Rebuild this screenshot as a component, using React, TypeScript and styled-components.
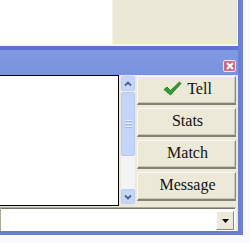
import React from 'react';
import styled, { createGlobalStyle } from 'styled-components';

const GlobalStyle = createGlobalStyle`
    html, body {
        margin: 0;
        padding: 0;
        background: #fbfbfd;
    }
    body {
        font-family: 'Liberation Serif', 'Times New Roman', serif;
    }
`;

const Window = styled.div`
    width: 238px;
    height: 231px;
    border-right: 5px solid #6c7fd5;
    border-bottom: 4px solid #6a7bd0;
    background: #ece9d8;
    display: flex;
    flex-direction: column;
`;

const TopArea = styled.div`
    height: 44px;
    display: flex;
    border-bottom: 2px solid #f6f5ef;
`;

const ListPane = styled.div`
    width: 112px;
    background: #fff;
    border-right: 1px solid #f3f2ec;
`;

const SidePane = styled.div`
    flex: 1;
    background: #ebe8d8;
    border-right: 1px solid #f4f3ee;
`;

const TitleBar = styled.div`
    height: 22px;
    border-top: 4px solid #5d73cf;
    background: linear-gradient(#8199e2, #7a93de);
    display: flex;
    align-items: flex-end;
    justify-content: flex-end;
    padding: 0 2px 3px 0;
    box-sizing: content-box;
`;

const CloseBox = styled.div`
    width: 13px;
    height: 12px;
    box-sizing: border-box;
    border: 1px solid #f1e6ee;
    border-radius: 2px;
    background: #c96c86;
    display: flex;
    align-items: center;
    justify-content: center;
`;

const Body = styled.div`
    display: flex;
    height: 131px;
`;

const ChatText = styled.div`
    width: 119px;
    background: #fff;
    border-top: 1px solid #000;
    border-right: 1px solid #000;
    border-bottom: 1px solid #000;
    box-sizing: border-box;
`;

const ScrollBar = styled.div`
    width: 14px;
    margin: 1px 0 2px 2px;
    background: #f4f4f6;
    display: flex;
    flex-direction: column;
`;

const ArrowBtn = styled.div`
    height: 15px;
    box-sizing: border-box;
    border: 1px solid #bccdf6;
    border-radius: 2px;
    background: #c6d5fb;
    display: flex;
    align-items: center;
    justify-content: center;
`;

const Thumb = styled.div<{ $size: number }>`
    height: ${(p) => p.$size}px;
    margin-top: 1px;
    box-sizing: border-box;
    border: 1px solid #b6c9f6;
    border-radius: 2px;
    background: #c4d4fb;
    display: flex;
    flex-direction: column;
    align-items: center;
    justify-content: center;
    gap: 1px;
`;

const GripLine = styled.div`
    width: 7px;
    height: 1px;
    background: #e9effd;
    border-bottom: 1px solid #9fb5ef;
`;

const Track = styled.div`
    flex: 1;
`;

const ButtonColumn = styled.div`
    width: 99px;
    margin-left: 2px;
    padding-top: 1px;
    display: flex;
    flex-direction: column;
    gap: 3px;
`;

const ActionButton = styled.div`
    height: 29px;
    box-sizing: border-box;
    background: #ece9d8;
    border-top: 1px solid #fbfaf6;
    border-left: 1px solid #fbfaf6;
    border-right: 1px solid #8d8a7c;
    border-bottom: 2px solid #858274;
    box-shadow: inset -1px -1px 0 #c9c6b6;
    display: flex;
    align-items: center;
    justify-content: center;
    gap: 5px;
    font-family: 'Liberation Serif', 'Times New Roman', serif;
    font-size: 16px;
    color: #111;
    padding: 0 0 3px 2px;
`;

const ComboRow = styled.div`
    flex: 1;
    padding: 1px 2px 0 0;
    display: flex;
`;

const Combo = styled.div`
    flex: 1;
    box-sizing: border-box;
    background: #fff;
    border-top: 1px solid #a9a799;
    border-left: 1px solid #a9a799;
    border-right: 1px solid #f8f7f2;
    box-shadow: inset 0 1px 0 #77756a;
    display: flex;
    justify-content: flex-end;
    padding: 3px 1px 1px 0;
`;

const ComboArrow = styled.div`
    width: 18px;
    box-sizing: border-box;
    background: #ece9d8;
    border-top: 1px solid #fff;
    border-left: 1px solid #fff;
    border-right: 1px solid #8a877a;
    border-bottom: 1px solid #8a877a;
    display: flex;
    align-items: center;
    justify-content: center;
`;

function Check() {
    return (
        <svg width="19" height="15" viewBox="0 0 19 15">
            <path
                d="M1 8.5 L4 6 L7.5 9.5 L16.5 1 L18 2.5 L7.5 14 Z"
                fill="#2f9e32"
                stroke="#1f6f22"
                strokeWidth="0.8"
                strokeLinejoin="round"
            />
        </svg>
    );
}

function Chevron({ down }: { down?: boolean }) {
    return (
        <svg width="8" height="6" viewBox="0 0 8 6">
            <path
                d={down ? 'M1 1.5 L4 4.5 L7 1.5' : 'M1 4.5 L4 1.5 L7 4.5'}
                fill="none"
                stroke="#4d6185"
                strokeWidth="1.8"
            />
        </svg>
    );
}

const buttons = ['Tell', 'Stats', 'Match', 'Message'];

export default function App() {
    return (
        <>
            <GlobalStyle />
            <Window>
                <TopArea>
                    <ListPane />
                    <SidePane />
                </TopArea>
                <TitleBar>
                    <CloseBox>
                        <svg width="8" height="8" viewBox="0 0 8 8">
                            <path d="M1 1 L7 7 M7 1 L1 7" stroke="#fff" strokeWidth="2" />
                        </svg>
                    </CloseBox>
                </TitleBar>
                <Body>
                    <ChatText />
                    <ScrollBar>
                        <ArrowBtn>
                            <Chevron />
                        </ArrowBtn>
                        <Thumb $size={64}>
                            <GripLine />
                            <GripLine />
                            <GripLine />
                        </Thumb>
                        <Track />
                        <ArrowBtn>
                            <Chevron down />
                        </ArrowBtn>
                    </ScrollBar>
                    <ButtonColumn>
                        {buttons.map((b) => (
                            <ActionButton key={b}>
                                {b === 'Tell' && <Check />}
                                {b}
                            </ActionButton>
                        ))}
                    </ButtonColumn>
                </Body>
                <ComboRow>
                    <Combo>
                        <ComboArrow>
                            <svg width="7" height="4" viewBox="0 0 7 4">
                                <path d="M0 0 L7 0 L3.5 4 Z" fill="#000" />
                            </svg>
                        </ComboArrow>
                    </Combo>
                </ComboRow>
            </Window>
        </>
    );
}
